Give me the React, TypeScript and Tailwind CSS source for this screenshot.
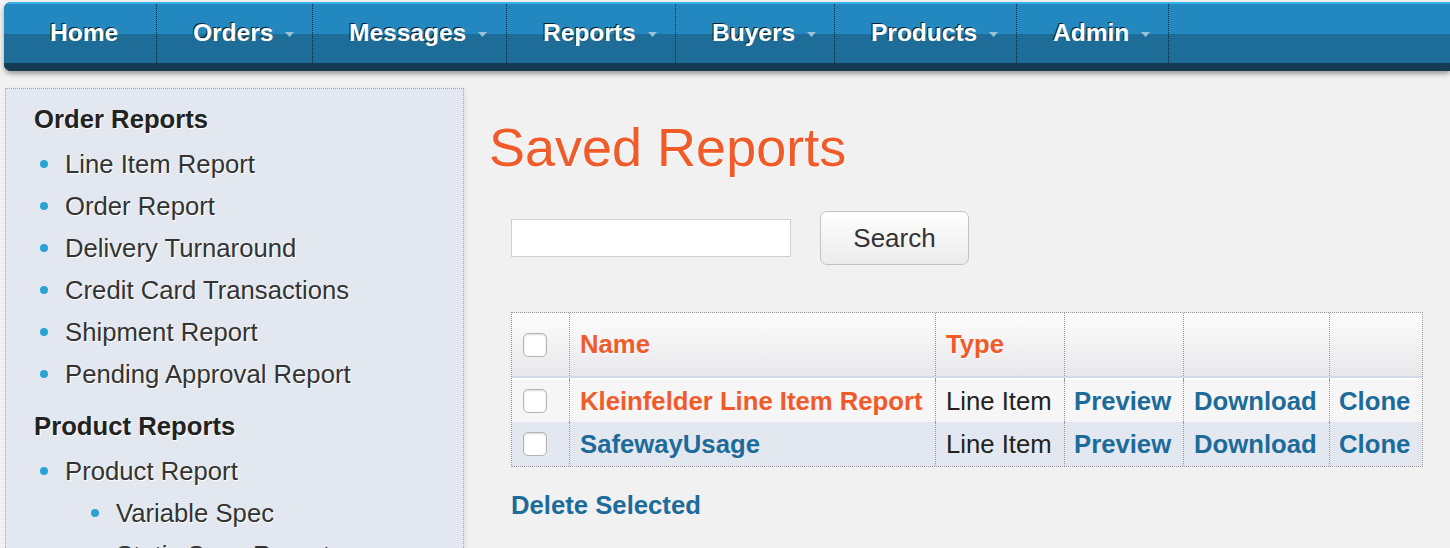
import React from "react";

const navItems = [
  { label: "Home", cls: "w-[153px] pl-[46px]", arrow: false },
  { label: "Orders", cls: "w-[156px] pl-[36px]", arrow: true },
  { label: "Messages", cls: "w-[194px] pl-[36px]", arrow: true },
  { label: "Reports", cls: "w-[169px] pl-[36px]", arrow: true },
  { label: "Buyers", cls: "w-[159px] pl-[36px]", arrow: true },
  { label: "Products", cls: "w-[182px] pl-[36px]", arrow: true },
  { label: "Admin", cls: "w-[152px] pl-[36px]", arrow: true },
];

function Arrow() {
  return (
    <svg width="9" height="5" viewBox="0 0 9 5" className="ml-[12px] mt-[2px]">
      <path d="M0 0h9L4.5 5z" fill="#9cc2da" />
    </svg>
  );
}

function Bullet({ text, nested }: { text: string; nested?: boolean }) {
  return (
    <li className={"flex items-center h-[42px] " + (nested ? "pl-[85px]" : "pl-[34px]")}>
      <span className="w-[8px] h-[8px] rounded-full bg-[#28a3d3] shrink-0" />
      <span className="ml-[17px] whitespace-nowrap">{text}</span>
    </li>
  );
}

function Checkbox() {
  return (
    <span className="block w-[24px] h-[24px] rounded-[5px] border border-[#b4b4b4] bg-white shadow-[inset_0_1px_2px_rgba(0,0,0,0.15)]" />
  );
}

const rows = [
  { name: "Kleinfelder Line Item Report", nameCls: "text-[#f15a29]", bg: "bg-[#f6f6f6]", h: "h-[42px]" },
  { name: "SafewayUsage", nameCls: "text-[#1c6b9a]", bg: "bg-[#e3e8f0]", h: "h-[44px]" },
];

export default function App() {
  return (
    <div className="w-[1450px] h-[548px] overflow-hidden bg-[#f1f1f1] font-['Liberation_Sans',Arial,sans-serif] text-[25.7px] text-[#333]">
      {/* Nav */}
      <div className="ml-[4px] mt-[2px] w-[1446px] h-[69px] rounded-l-[7px] overflow-hidden flex flex-col shadow-[0_3px_5px_rgba(0,0,0,0.35)] bg-[#163a52]">
        <div className="h-[2px] bg-[#35b3e8]" />
        <div className="h-[59px] flex bg-[linear-gradient(to_bottom,#2288bf_0px,#2288bf_30px,#1e6d98_30px,#1e6d98_59px)]">
          {navItems.map((it) => (
            <div
              key={it.label}
              className={
                "h-full flex items-center border-r border-dotted border-[#082336] shrink-0 " + it.cls
              }
            >
              <span className="text-white font-bold text-[24.5px] [text-shadow:-1px_-1px_0_rgba(0,0,0,0.75)]">
                {it.label}
              </span>
              {it.arrow && <Arrow />}
            </div>
          ))}
        </div>
        <div className="h-[8px] bg-[#163a52]" />
      </div>

      <div className="flex mt-[17px] items-start">
        {/* Sidebar */}
        <aside className="ml-[5px] w-[459px] h-[520px] shrink-0 border border-dotted border-[#a6a6a6] bg-[#e3e8f0] pt-[9px] shadow-[2px_0_4px_rgba(0,0,0,0.06)] [text-shadow:1px_1px_0_#fff]">
          <h2 className="pl-[28px] h-[42px] leading-[42px] font-bold text-[#222] mb-[3px]">Order Reports</h2>
          <ul>
            <Bullet text="Line Item Report" />
            <Bullet text="Order Report" />
            <Bullet text="Delivery Turnaround" />
            <Bullet text="Credit Card Transactions" />
            <Bullet text="Shipment Report" />
            <Bullet text="Pending Approval Report" />
          </ul>
          <h2 className="pl-[28px] h-[42px] leading-[42px] font-bold text-[#222] mt-[10px] mb-[3px]">Product Reports</h2>
          <ul>
            <Bullet text="Product Report" />
            <Bullet text="Variable Spec" nested />
            <Bullet text="Static Spec Report" nested />
          </ul>
        </aside>

        {/* Main */}
        <main className="ml-[25px] flex-1">
          <h1 className="mt-[29px] text-[54px] leading-[60px] text-[#f15a29] font-normal [text-shadow:1px_1px_0_#fff]">
            Saved Reports
          </h1>

          <div className="ml-[22px] mt-[34px] flex items-center">
            <input
              type="text"
              className="w-[280px] h-[38px] bg-white border border-[#cfcfcf] outline-none"
            />
            <button className="ml-[29px] w-[149px] h-[54px] rounded-[7px] border border-[#c2c2c2] bg-[linear-gradient(to_bottom,#ffffff,#ebebeb)] text-[26px] text-[#333] flex items-center justify-center">
              Search
            </button>
          </div>

          {/* Table */}
          <div className="ml-[22px] mt-[47px] w-[912px] border border-dotted border-[#999]">
            <div className="grid grid-cols-[57px_366px_129px_119px_146px_93px] h-[65px] bg-[linear-gradient(to_bottom,#fdfdfd,#e8e8eb)] border-b-2 border-b-[#d2dae5]">
              <div className="flex items-center pl-[11px]">
                <Checkbox />
              </div>
              <div className="flex items-center pl-[10px] border-l border-dotted border-[#999] font-bold text-[#f15a29] [text-shadow:1px_1px_0_#fff]">Name</div>
              <div className="flex items-center pl-[10px] border-l border-dotted border-[#999] font-bold text-[#f15a29] [text-shadow:1px_1px_0_#fff]">Type</div>
              <div className="border-l border-dotted border-[#999]" />
              <div className="border-l border-dotted border-[#999]" />
              <div className="border-l border-dotted border-[#999]" />
            </div>
            <div className="grid grid-cols-[57px_366px_129px_119px_146px_93px] h-[2px] bg-white">
              <div />
              <div className="border-l border-dotted border-[#999]" />
              <div className="border-l border-dotted border-[#999]" />
              <div className="border-l border-dotted border-[#999]" />
              <div className="border-l border-dotted border-[#999]" />
              <div className="border-l border-dotted border-[#999]" />
            </div>
            {rows.map((r) => (
              <div key={r.name} className={"grid grid-cols-[57px_366px_129px_119px_146px_93px] " + r.h + " " + r.bg}>
                <div className="flex items-center pl-[11px]">
                  <Checkbox />
                </div>
                <div className={"flex items-center pl-[10px] border-l border-dotted border-[#999] font-bold whitespace-nowrap " + r.nameCls}>{r.name}</div>
                <div className="flex items-center pl-[10px] border-l border-dotted border-[#999] text-[#222] whitespace-nowrap">Line Item</div>
                <div className="flex items-center pl-[9px] border-l border-dotted border-[#999] font-bold text-[#1c6b9a]">Preview</div>
                <div className="flex items-center pl-[10px] border-l border-dotted border-[#999] font-bold text-[#1c6b9a]">Download</div>
                <div className="flex items-center pl-[9px] border-l border-dotted border-[#999] font-bold text-[#1c6b9a]">Clone</div>
              </div>
            ))}
          </div>

          <div className="ml-[22px] mt-[23px] font-bold text-[#1c6b9a] leading-[30px]">Delete Selected</div>
        </main>
      </div>
    </div>
  );
}
